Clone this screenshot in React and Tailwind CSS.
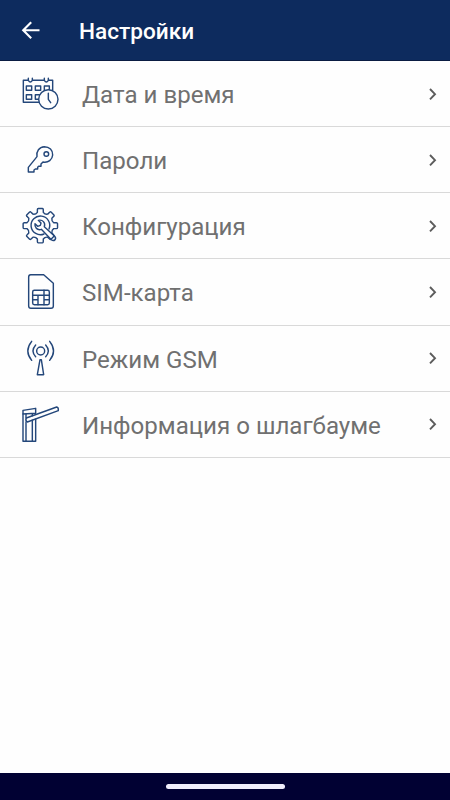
const TEETH = 8;

function gearPath(cx, cy, outer, inner) {
  const at = (radius, angle) =>
    `${(cx + radius * Math.sin(angle)).toFixed(1)} ${(cy - radius * Math.cos(angle)).toFixed(1)}`;
  const parts = [];

  for (let i = 0; i < TEETH; i += 1) {
    const mid = (i * 2 * Math.PI) / TEETH;
    const next = mid + (2 * Math.PI) / TEETH;

    parts.push(
      `${i === 0 ? "M" : "L"}${at(inner, mid - 0.22)}`,
      `L${at(outer - 3, mid - 0.18)}`,
      `Q${at(outer, mid - 0.17)} ${at(outer, mid - 0.12)}`,
      `L${at(outer, mid + 0.12)}`,
      `Q${at(outer, mid + 0.17)} ${at(outer - 3, mid + 0.18)}`,
      `L${at(inner, mid + 0.22)}`,
      `Q${at(inner - 5, (mid + next) / 2)} ${at(inner, next - 0.22)}`,
    );
  }

  return `${parts.join("")}Z`;
}

function RowIcon({ children }) {
  return (
    <svg
      viewBox="0 0 162 144"
      className="h-12 w-[54px] shrink-0"
      fill="none"
      stroke="#24477a"
      strokeWidth="4.3"
      strokeLinecap="round"
      strokeLinejoin="round"
    >
      {children}
    </svg>
  );
}

function CalendarIcon() {
  return (
    <RowIcon>
      <path d="M74 97H28V31H42M56 31H90M104 31H116V60" />
      <path d="M43 25V31Q49 41 55 31V25M91 25V31Q97 41 103 31V25" />
      <path d="M37 48H53V61H37ZM64 48H80V61H64ZM106 58V48H91V61" />
      <path d="M37 74H53V88H37ZM76 74H64V88H73" />
      <circle cx="103" cy="88" r="29" />
      <path d="M103 70V88L110 98" />
    </RowIcon>
  );
}

function KeyIcon() {
  return (
    <RowIcon>
      <path d="M69 62C66 46 76 33 91 32C106 32 117 43 116 57C115 71 103 81 87 78L81 84V91H74L71 94V99H64L60 102V108H43V94Z" />
      <circle cx="97" cy="54" r="7" />
    </RowIcon>
  );
}

function GearIcon() {
  return (
    <RowIcon>
      <path d={gearPath(79, 71, 52, 41)} />
      <path d="M90 96A28 28 0 1 1 105 81" />
      <path d="M73 55L81 63L79 70L71 73L63 65C61 76 70 86 82 82L112 113C120 120 129 111 122 103L91 74C95 62 86 52 73 55Z" />
    </RowIcon>
  );
}

function SimIcon() {
  return (
    <RowIcon>
      <path d="M50 20H89L118 46V114Q118 121 111 121H51Q44 121 44 114V27Q44 20 50 20Z" />
      <rect x="56" y="67" width="50" height="43" rx="5" />
      <path d="M56 82H72M56 95H72V110M72 82V95M72 82H90V67M90 82V110M90 95H106M90 82H106" />
    </RowIcon>
  );
}

function AntennaIcon() {
  return (
    <RowIcon>
      <circle cx="80" cy="51" r="12" />
      <path d="M65 33Q49 51 65 68M95 33Q111 51 95 68" />
      <path d="M53 22Q30 51 53 79M107 22Q130 51 107 79" />
      <path d="M78 77H82L89 122H70Z" />
    </RowIcon>
  );
}

function BarrierIcon() {
  return (
    <RowIcon>
      <path d="M27 31L65 25V40L27 42Z" />
      <path d="M27 42V124H65V58M36 42V54M36 66V124M55 61V124M55 42V47" />
      <path d="M37 54L128 21Q134 22 133 32L40 66Q33 62 37 54Z" />
    </RowIcon>
  );
}

const ITEMS = [
  { label: "Дата и время", icon: CalendarIcon },
  { label: "Пароли", icon: KeyIcon },
  { label: "Конфигурация", icon: GearIcon },
  { label: "SIM-карта", icon: SimIcon },
  { label: "Режим GSM", icon: AntennaIcon },
  { label: "Информация о шлагбауме", icon: BarrierIcon },
];

function SettingsRow({ label, icon: Icon }) {
  return (
    <li className="h-[66.15px] border-b border-[#d9d9d9]">
      <button
        type="button"
        className="flex h-full w-full items-center pl-3.5 pr-[11px] text-left"
      >
        <Icon />
        <span className="ml-3.5 flex-1 whitespace-nowrap pt-[3px] text-[24.1px] leading-7 text-[#707070]">
          {label}
        </span>
        <svg
          viewBox="0 0 12 16"
          className="h-4 w-3 shrink-0"
          fill="none"
          stroke="#5c5c5c"
          strokeWidth="1.9"
        >
          <path d="M3 3L8 8.2L3 13.4" />
        </svg>
      </button>
    </li>
  );
}

export default function App() {
  return (
    <div className="flex h-screen flex-col bg-[#fefefe] font-['Roboto',sans-serif]">
      <header className="flex h-[61px] shrink-0 items-center border-b border-[#0a1c42] bg-[#0d2b5e] pl-[21px] text-white">
        <button type="button" aria-label="Назад">
          <svg
            viewBox="0 0 20 20"
            className="size-5"
            fill="none"
            stroke="currentColor"
            strokeWidth="2.1"
          >
            <path d="M18.5 10.2H2.5M10.2 2.2L2.2 10.2L10.2 18.2" />
          </svg>
        </button>
        <h1 className="ml-[38px] pt-[3px] text-[22.6px] font-medium leading-7">
          Настройки
        </h1>
      </header>

      <ul className="flex-1">
        {ITEMS.map((item) => (
          <SettingsRow key={item.label} label={item.label} icon={item.icon} />
        ))}
      </ul>

      <footer className="flex h-[27px] shrink-0 items-center justify-center bg-[#010133]">
        <div className="h-[5px] w-[119px] rounded-full bg-[#f0eefc]" />
      </footer>
    </div>
  );
}
